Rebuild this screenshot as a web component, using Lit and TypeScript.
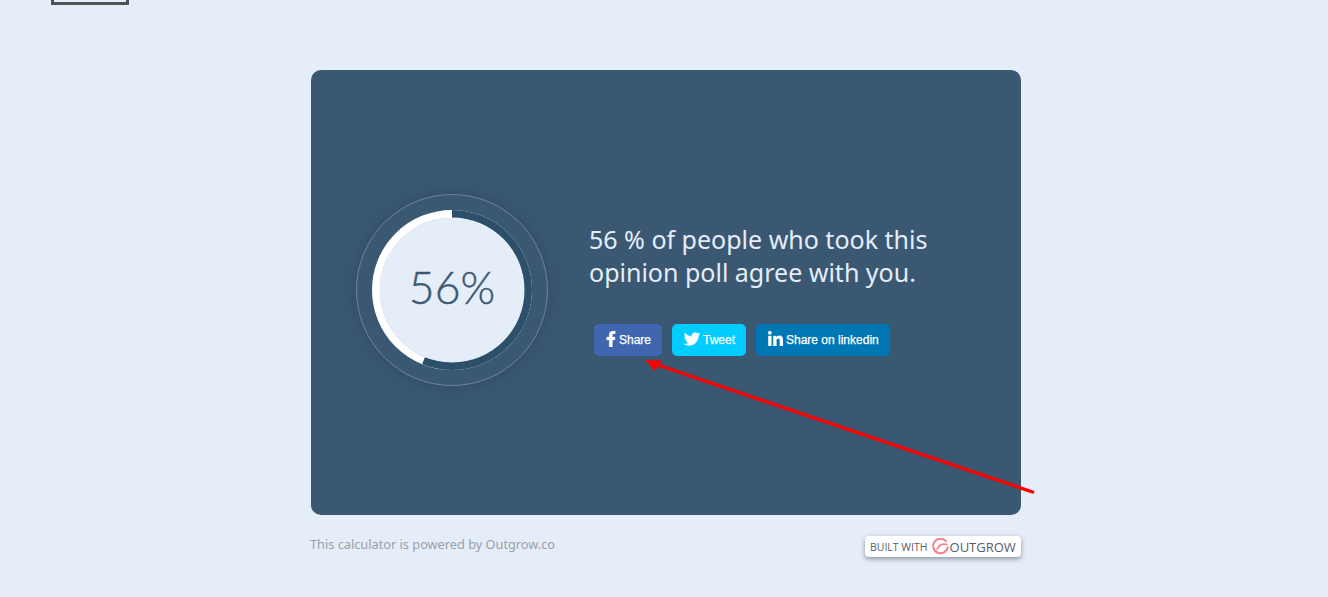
import { LitElement, html, css, svg } from "lit";
import { customElement } from "lit/decorators.js";

const R = 76;
const C = 2 * Math.PI * R;

@customElement("app-root")
export class AppRoot extends LitElement {
  static styles = css`
    :host { display: block; position: relative; height: 597px; overflow: hidden; background: #e5edf8; font-family: "Noto Sans", sans-serif; }
    .logo-box { width: 72px; height: 2px; margin-left: 51px; border: 3px solid #4f5356; border-top: 0; }
    .main { width: 710px; margin: 65px 0 0 311px; }
    .card { height: 445px; box-sizing: border-box; background: #3a5872; border-radius: 10px; display: flex; align-items: center; gap: 41px; padding: 0 0 5px 45px; }
    .gauge { width: 192px; height: 192px; flex: none; box-sizing: border-box; border-radius: 50%; border: 1px solid #6d8596; box-shadow: 0 0 14px rgba(30, 50, 70, .35); display: grid; place-items: center; }
    .gauge svg { grid-area: 1 / 1; width: 160px; height: 160px; display: block; }
    .pct { grid-area: 1 / 1; z-index: 1; font: 300 44.5px/1 "Lato", sans-serif; -webkit-text-stroke: .4px #3a5872; color: #3a5872; padding-bottom: 5px; }
    .info { width: 370px; display: flex; flex-direction: column; gap: 35px; padding-bottom: 1px; }
    h1 { margin: 0; font: 400 25px/33px "Noto Sans", sans-serif; color: #e5edf8; }
    .btns { display: flex; gap: 10px; padding-left: 5px; }
    .btn { height: 32px; box-sizing: border-box; border-radius: 5px; display: flex; align-items: center; color: #fff; font: 400 12px "Liberation Sans", sans-serif; -webkit-text-stroke: .25px #fff; }
    .btn svg { fill: #fff; stroke: #fff; stroke-width: 10; display: block; flex: none; margin-bottom: 2px; }
    .fb { width: 68px; padding-left: 12px; gap: 3px; background: #4166b0; }
    .tw { width: 74px; padding-left: 12px; gap: 3px; background: #00ccff; }
    .li { width: 134px; padding-left: 12px; gap: 3px; background: #0077b5; }
    .li svg { margin-bottom: 3px; }
    .foot { display: flex; justify-content: space-between; align-items: center; margin-top: 21px; }
    .note { font: 400 12.75px "Noto Sans", sans-serif; color: #9a9fab; position: relative; top: -3px; left: -1px; }
    .badge { width: 156px; height: 21px; box-sizing: border-box; background: #fff; border-radius: 4px; box-shadow: 0 2px 5px rgba(50, 60, 80, .5); display: flex; align-items: center; padding-left: 5px; color: #555d6b; font-family: "Open Sans", sans-serif; }
    .built { font-size: 10.5px; margin-right: 4px; white-space: nowrap; }
    .brand { font-size: 13px; margin-left: 1px; white-space: nowrap; }
    .badge svg { flex: none; display: block; }
    .arrow { position: absolute; inset: 0; width: 1328px; height: 597px; pointer-events: none; }
  `;

  render() {
    return html`
      <div class="logo-box"></div>
      <div class="main">
        <div class="card">
          <div class="gauge">
            <svg viewBox="0 0 160 160">
              <circle cx="80" cy="80" r="${R}" fill="none" stroke="#fff" stroke-width="8"></circle>
              <circle cx="80" cy="80" r="${R}" fill="none" stroke="#2c5069" stroke-width="8"
                stroke-dasharray="${C * 0.56} ${C}" transform="rotate(-90 80 80)"></circle>
              <circle cx="80" cy="80" r="72.5" fill="#e5edf8"></circle>
            </svg>
            <div class="pct">56%</div>
          </div>
          <div class="info">
            <h1>56 % of people who took this<br />opinion poll agree with you.</h1>
            <div class="btns">
              <div class="btn fb">
                <svg width="10" height="16" viewBox="0 0 320 512"><path d="M279.14 288l14.22-92.66h-88.91v-60.13c0-25.35 12.42-50.06 52.24-50.06h40.42V6.26S260.43 0 225.36 0c-73.22 0-121.08 44.38-121.08 124.72v70.62H22.89V288h81.39v224h100.17V288z"></path></svg>
                Share
              </div>
              <div class="btn tw">
                <svg width="16" height="16" viewBox="0 0 512 512"><path d="M459.37 151.716c.325 4.548.325 9.097.325 13.645 0 138.72-105.583 298.558-298.558 298.558-59.452 0-114.68-17.219-161.137-47.106 8.447.974 16.568 1.299 25.34 1.299 49.055 0 94.213-16.568 130.274-44.832-46.132-.975-84.792-31.188-98.112-72.772 6.498.974 12.995 1.624 19.818 1.624 9.421 0 18.843-1.3 27.614-3.573-48.081-9.747-84.143-51.98-84.143-102.985v-1.299c13.969 7.797 30.214 12.67 47.431 13.319-28.264-18.843-46.781-51.005-46.781-87.391 0-19.492 5.197-37.36 14.294-52.954 51.655 63.675 129.3 105.258 216.365 109.807-1.624-7.797-2.599-15.918-2.599-24.04 0-57.828 46.782-104.934 104.934-104.934 30.213 0 57.502 12.67 76.67 33.137 23.715-4.548 46.456-13.645 66.599-25.665-7.798 24.366-24.366 44.833-46.132 57.827 21.117-2.273 41.584-8.122 60.426-16.243-14.292 20.791-32.161 39.308-52.628 54.253z"></path></svg>
                Tweet
              </div>
              <div class="btn li">
                <svg width="15" height="15" viewBox="0 0 448 448"><path d="M100.28 448H7.4V148.9h92.88zM53.79 108.1C24.09 108.1 0 83.5 0 53.8a53.79 53.79 0 0 1 107.58 0c0 29.7-24.1 54.3-53.79 54.3zM447.9 448h-92.68V302.4c0-34.7-.7-79.2-48.29-79.2-48.29 0-55.69 37.7-55.69 76.7V448h-92.78V148.9h89.08v40.8h1.3c12.4-23.5 42.69-48.3 87.88-48.3 94 0 111.28 61.9 111.28 142.3V448z"></path></svg>
                Share on linkedin
              </div>
            </div>
          </div>
        </div>
        <div class="foot">
          <div class="note">This calculator is powered by Outgrow.co</div>
          <div class="badge">
            <span class="built">BUILT WITH</span>
            <svg width="17" height="17" viewBox="0 0 17 17" fill="none" stroke="#f4818c" stroke-width="2">
              <path d="M14.5 3.8A7.3 7.3 0 1 0 15.8 8.5"></path>
              <path d="M4.5 11.5c1.5-.5 2-3 4-4.5 1.500-1 4-1 7.300-.5" stroke-width="1.7"></path>
            </svg>
            <span class="brand">OUTGROW</span>
          </div>
        </div>
      </div>
      <svg class="arrow" viewBox="0 0 1328 597">
        ${svg`<path d="M1034 492.500L658 365" stroke="#f00" stroke-width="3.4" fill="none"></path>
        <path d="M645 360L662 360.500L655 371z" fill="#f00"></path>`}
      </svg>
    `;
  }
}
